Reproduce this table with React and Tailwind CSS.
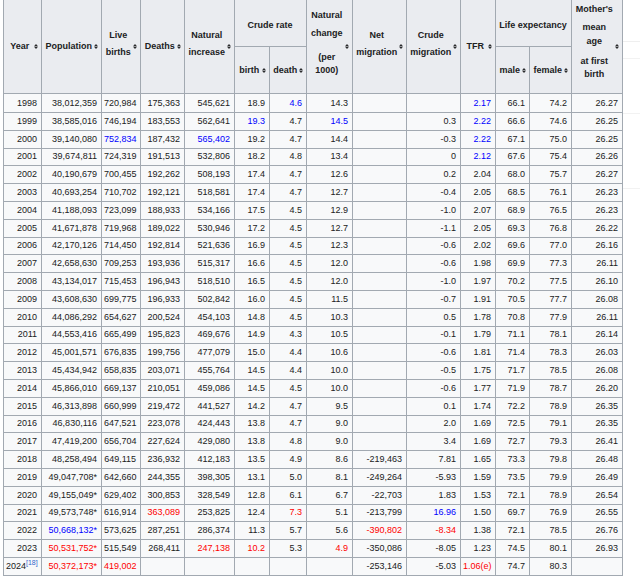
const B = 'b';
const R = 'r';

// cells are plain strings, or [text, colour] where the value is marked blue or red
const rows = [
  ['1998', '38,012,359', '720,984', '175,363', '545,621', '18.9', ['4.6', B], '14.3', '', '', ['2.17', B], '66.1', '74.2', '26.27'],
  ['1999', '38,585,016', '746,194', '183,553', '562,641', ['19.3', B], '4.7', ['14.5', B], '', '0.3', ['2.22', B], '66.6', '74.6', '26.25'],
  ['2000', '39,140,080', ['752,834', B], '187,432', ['565,402', B], '19.2', '4.7', '14.4', '', '-0.3', ['2.22', B], '67.1', '75.0', '26.25'],
  ['2001', '39,674,811', '724,319', '191,513', '532,806', '18.2', '4.8', '13.4', '', '0', ['2.12', B], '67.6', '75.4', '26.26'],
  ['2002', '40,190,679', '700,455', '192,262', '508,193', '17.4', '4.7', '12.6', '', '0.2', '2.04', '68.0', '75.7', '26.27'],
  ['2003', '40,693,254', '710,702', '192,121', '518,581', '17.4', '4.7', '12.7', '', '-0.4', '2.05', '68.5', '76.1', '26.23'],
  ['2004', '41,188,093', '723,099', '188,933', '534,166', '17.5', '4.5', '12.9', '', '-1.0', '2.07', '68.9', '76.5', '26.23'],
  ['2005', '41,671,878', '719,968', '189,022', '530,946', '17.2', '4.5', '12.7', '', '-1.1', '2.05', '69.3', '76.8', '26.22'],
  ['2006', '42,170,126', '714,450', '192,814', '521,636', '16.9', '4.5', '12.3', '', '-0.6', '2.02', '69.6', '77.0', '26.16'],
  ['2007', '42,658,630', '709,253', '193,936', '515,317', '16.6', '4.5', '12.0', '', '-0.6', '1.98', '69.9', '77.3', '26.11'],
  ['2008', '43,134,017', '715,453', '196,943', '518,510', '16.5', '4.5', '12.0', '', '-1.0', '1.97', '70.2', '77.5', '26.10'],
  ['2009', '43,608,630', '699,775', '196,933', '502,842', '16.0', '4.5', '11.5', '', '-0.7', '1.91', '70.5', '77.7', '26.08'],
  ['2010', '44,086,292', '654,627', '200,524', '454,103', '14.8', '4.5', '10.3', '', '0.5', '1.78', '70.8', '77.9', '26.11'],
  ['2011', '44,553,416', '665,499', '195,823', '469,676', '14.9', '4.3', '10.5', '', '-0.1', '1.79', '71.1', '78.1', '26.14'],
  ['2012', '45,001,571', '676,835', '199,756', '477,079', '15.0', '4.4', '10.6', '', '-0.6', '1.81', '71.4', '78.3', '26.03'],
  ['2013', '45,434,942', '658,835', '203,071', '455,764', '14.5', '4.4', '10.0', '', '-0.5', '1.75', '71.7', '78.5', '26.08'],
  ['2014', '45,866,010', '669,137', '210,051', '459,086', '14.5', '4.5', '10.0', '', '-0.6', '1.77', '71.9', '78.7', '26.20'],
  ['2015', '46,313,898', '660,999', '219,472', '441,527', '14.2', '4.7', '9.5', '', '0.1', '1.74', '72.2', '78.9', '26.35'],
  ['2016', '46,830,116', '647,521', '223,078', '424,443', '13.8', '4.7', '9.0', '', '2.0', '1.69', '72.5', '79.1', '26.35'],
  ['2017', '47,419,200', '656,704', '227,624', '429,080', '13.8', '4.8', '9.0', '', '3.4', '1.69', '72.7', '79.3', '26.41'],
  ['2018', '48,258,494', '649,115', '236,932', '412,183', '13.5', '4.9', '8.6', '-219,463', '7.81', '1.65', '73.3', '79.8', '26.48'],
  ['2019', '49,047,708*', '642,660', '244,355', '398,305', '13.1', '5.0', '8.1', '-249,264', '-5.93', '1.59', '73.5', '79.9', '26.49'],
  ['2020', '49,155,049*', '629,402', '300,853', '328,549', '12.8', '6.1', '6.7', '-22,703', '1.83', '1.53', '72.1', '78.9', '26.54'],
  ['2021', '49,573,748*', '616,914', ['363,089', R], '253,825', '12.4', ['7.3', R], '5.1', '-213,799', ['16.96', B], '1.50', '69.7', '76.9', '26.55'],
  ['2022', ['50,668,132*', B], '573,625', '287,251', '286,374', '11.3', '5.7', '5.6', ['-390,802', R], ['-8.34', R], '1.38', '72.1', '78.5', '26.76'],
  ['2023', ['50,531,752*', R], '515,549', '268,411', ['247,138', R], ['10.2', R], '5.3', ['4.9', R], '-350,086', '-8.05', '1.23', '74.5', '80.1', '26.93'],
  ['2024', ['50,372,173*', R], ['419,002', R], '', '', '', '', '', '-253,146', '-5.03', ['1.06(e)', R], '74.7', '80.3', ''],
];

const widths = [38, 60, 39, 44, 50, 35, 37, 46, 54, 54, 35, 34, 42, 51];

const SortIcon = () => (
  <svg width="4" height="5" viewBox="0 0 4 5" className="shrink-0 mr-[0.5px]">
    <polygon points="2,0 4,2.2 0,2.2" fill="#2a2b2c" />
    <polygon points="0,2.8 4,2.8 2,5" fill="#2a2b2c" />
  </svg>
);

const Th = ({ children, rowSpan, colSpan, sort = true, inner = '' }) => (
  <th
    rowSpan={rowSpan}
    colSpan={colSpan}
    className="border border-[#a2a9b1] bg-[#eaecf0] pl-[2px] pr-[3px] py-0 font-bold align-middle"
  >
    <div className="flex items-center">
      <div className={`flex-1 text-center leading-[17px] ${inner}`}>{children}</div>
      {sort && <SortIcon />}
    </div>
  </th>
);

const Cell = ({ v, first }) => {
  const [text, colour] = Array.isArray(v) ? v : [v, null];
  const colourClass = colour === B ? 'text-[#0000ff]' : colour === R ? 'text-[#ff0000]' : '';
  return (
    <td className={`border border-[#a2a9b1] bg-[#f8f9fa] pl-[2px] pr-[4px] py-0 text-right whitespace-nowrap leading-[13px] ${colourClass}`}>
      {text}
      {first && text === '2024' && (
        <sup className="text-[7px] text-[#3366cc] leading-none">[18]</sup>
      )}
    </td>
  );
};

export default function App() {
  return (
    <div className="flex w-[640px] h-[576px] overflow-hidden bg-white text-[#202122] font-['Liberation_Sans',Arial,sans-serif] text-[9px]">
      <div className="pl-[3px] -mt-px">
        <table className="border-collapse table-fixed w-[620px]">
          <colgroup>
            {widths.map((w, i) => (
              <col key={i} style={{ width: w }} />
            ))}
          </colgroup>
          <thead>
            <tr className="h-[46px]">
              <Th rowSpan={2}>Year</Th>
              <Th rowSpan={2}>Population</Th>
              <Th rowSpan={2} inner="pb-[6px]">Live<br />births</Th>
              <Th rowSpan={2}>Deaths</Th>
              <Th rowSpan={2} inner="pb-[6px]">Natural<br />increase</Th>
              <Th colSpan={2} sort={false} inner="pt-[4px]">Crude rate</Th>
              <Th rowSpan={2} inner="pb-[10px]">
                <div className="leading-[18px]">Natural<br />change</div>
                <div className="mt-[9px] leading-[13px]">(per<br />1000)</div>
              </Th>
              <Th rowSpan={2} inner="pb-[6px]">Net<br />migration</Th>
              <Th rowSpan={2} inner="pb-[6px]">Crude<br />migration</Th>
              <Th rowSpan={2}>TFR</Th>
              <Th colSpan={2} sort={false} inner="pt-[4px]">Life expectancy</Th>
              <Th rowSpan={2} inner="pb-[12px]">
                <div className="leading-[18px]">Mother's</div>
                <div className="leading-[18px]">mean</div>
                <div className="leading-[10px]">age</div>
                <div className="mt-[9px] leading-[13px]">at first<br />birth</div>
              </Th>
            </tr>
            <tr className="h-[46px]">
              <Th>birth</Th>
              <Th>death</Th>
              <Th>male</Th>
              <Th>female</Th>
            </tr>
          </thead>
          <tbody>
            {rows.map((r, i) => (
              <tr key={r[0]} className={i === 0 ? 'h-[19px]' : 'h-[17.8px]'}>
                {r.map((v, j) => (
                  <Cell key={j} v={v} first={j === 0} />
                ))}
              </tr>
            ))}
          </tbody>
        </table>
      </div>
      <div className="flex-1 flex flex-col">
        <div className="mt-[41px] h-px bg-[#efefef]" />
        <div className="mt-[16px] h-px bg-[#f2f2f2]" />
        <div className="mt-[54px] h-px bg-[#f2f2f2]" />
        <div className="mt-[74px] h-px bg-[#f2f2f2]" />
      </div>
    </div>
  );
}
